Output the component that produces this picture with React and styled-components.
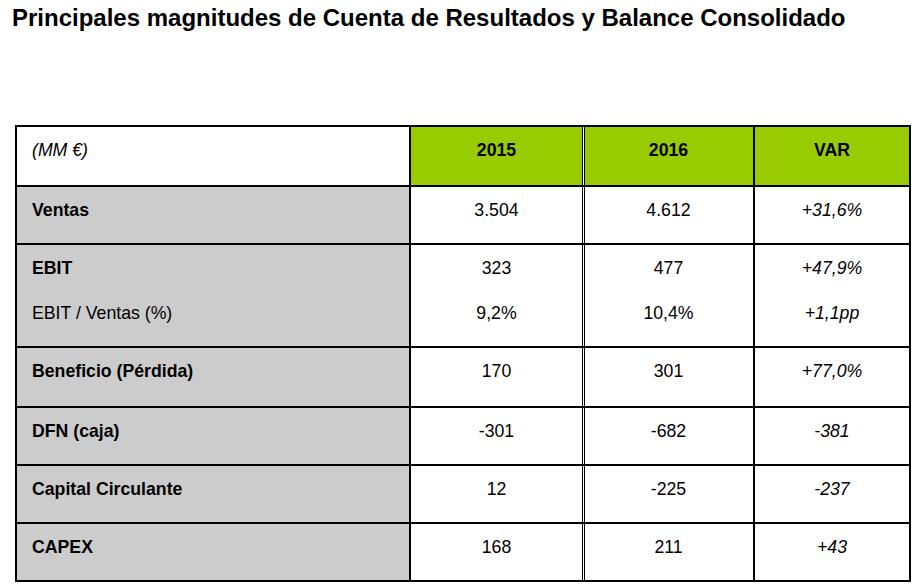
import React from "react";
import styled, { createGlobalStyle, css } from "styled-components";

const GlobalStyle = createGlobalStyle`
  html, body {
    margin: 0;
    padding: 0;
    background: #fff;
  }
  body {
    font-family: "Liberation Sans", Arial, sans-serif;
    color: #000;
  }
`;

const Page = styled.div`
  display: flex;
  flex-direction: column;
  align-items: flex-start;
`;

const Title = styled.h1`
  margin: 4px 0 0 12px;
  font-size: 24px;
  font-weight: bold;
  line-height: 1.15;
  white-space: nowrap;
`;

const Grid = styled.div`
  margin: 93px 0 0 15px;
  display: grid;
  grid-template-columns: 392px 171px 169px 154px;
  grid-template-rows: 58px 56px 101px 58px 56px 56px 56px;
  gap: 2px;
  padding: 2px;
  background: #000;
`;

const Cell = styled.div`
  position: relative;
  display: flex;
  flex-direction: column;
  gap: 24.6px;
  padding: 13.5px 0 0;
  font-size: 17.7px;
  line-height: 1.15;
  background: ${(p) => (p.$tone === "green" ? "#99cc00" : p.$tone === "grey" ? "#cccccc" : "#fff")};
  font-weight: ${(p) => (p.$bold ? "bold" : "normal")};
  font-style: ${(p) => (p.$italic ? "italic" : "normal")};
  align-items: ${(p) => (p.$label ? "flex-start" : "center")};
  padding-left: ${(p) => (p.$label ? "15px" : "0")};
  ${(p) =>
    p.$double &&
    css`
      box-shadow: inset 1px 0 0 #000;
      &::before {
        content: "";
        position: absolute;
        left: -1px;
        top: 0;
        bottom: 0;
        width: 1px;
        background: #fff;
      }
    `}
`;

const Sub = styled.span`
  font-weight: normal;
`;

const rows = [
  { label: ["Ventas"], values: [["3.504"], ["4.612"], ["+31,6%"]] },
  {
    label: ["EBIT", "EBIT / Ventas (%)"],
    values: [
      ["323", "9,2%"],
      ["477", "10,4%"],
      ["+47,9%", "+1,1pp"],
    ],
  },
  { label: ["Beneficio (Pérdida)"], values: [["170"], ["301"], ["+77,0%"]] },
  { label: ["DFN (caja)"], values: [["-301"], ["-682"], ["-381"]] },
  { label: ["Capital Circulante"], values: [["12"], ["-225"], ["-237"]] },
  { label: ["CAPEX"], values: [["168"], ["211"], ["+43"]] },
];

export default function App() {
  return (
    <Page>
      <GlobalStyle />
      <Title>Principales magnitudes de Cuenta de Resultados y Balance Consolidado</Title>
      <Grid>
        <Cell $label $italic>
          (MM €)
        </Cell>
        <Cell $tone="green" $bold>
          2015
        </Cell>
        <Cell $tone="green" $bold $double>
          2016
        </Cell>
        <Cell $tone="green" $bold>
          VAR
        </Cell>
        {rows.map((row) => (
          <React.Fragment key={row.label[0]}>
            <Cell $label $tone="grey" $bold>
              {row.label.map((l, i) => (i === 0 ? <span key={l}>{l}</span> : <Sub key={l}>{l}</Sub>))}
            </Cell>
            {row.values.map((vals, ci) => (
              <Cell key={ci} $double={ci === 1} $italic={ci === 2}>
                {vals.map((v) => (
                  <span key={v}>{v}</span>
                ))}
              </Cell>
            ))}
          </React.Fragment>
        ))}
      </Grid>
    </Page>
  );
}
